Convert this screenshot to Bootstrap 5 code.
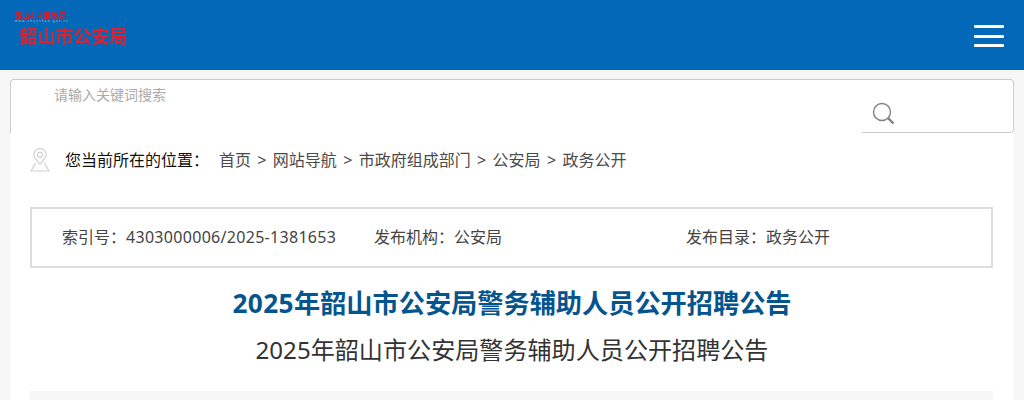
<!DOCTYPE html>
<html lang="zh-CN">
<head>
  <meta charset="UTF-8">
  <meta name="viewport" content="width=device-width, initial-scale=1.0">
  <title>2025年韶山市公安局警务辅助人员公开招聘公告</title>
  <link href="https://cdn.jsdelivr.net/npm/bootstrap@5.3.0/dist/css/bootstrap.min.css" rel="stylesheet">
  <style>
    html, body { height: 400px; overflow: hidden; }
    body { background: #f6f6f6; color: #333; font-family: "Noto Sans", "Noto Sans CJK SC", sans-serif; }
    .top-bar { height: 70px; background: #0468b9; padding: 12px 20px 0 15px; }
    .logo-wrap { width: 120px; filter: blur(.2px); }
    .logo-gov { font-size: 7px; line-height: 8px; letter-spacing: .2px; color: #e0182a; font-weight: 900; white-space: nowrap; }
    .logo-en { font-size: 3px; line-height: 3px; color: #9cc4e4; letter-spacing: 1.2px; white-space: nowrap; }
    .logo-unit { font-size: 18px; line-height: 20px; margin: 3px 0 0 4.500px; color: #e0202a; font-weight: 700; white-space: nowrap; }
    .menu-btn { width: 30px; height: 22px; margin-top: 13px; padding: 0; border: 0; background: none; }
    .menu-btn span { height: 3px; background: #fff; border-radius: 1px; }
    .page-box { margin: 9px 10px 0; background: #fff; height: 330px; overflow: hidden; }
    .search-row { height: 54px; }
    .search-left { border: solid #ccc; border-width: 1px 0 0 1px; border-top-left-radius: 4px; padding: 5px 0 0 43px; font-size: 14px; line-height: 20px; color: #aaa; }
    .search-right { width: 152px; border: solid #ccc; border-width: 1px 1px 1px 0; border-radius: 0 4px 4px 0; padding: 20px 0 0 10px; }
    .crumb-row { height: 55px; padding: 0 20px 2px; font-size: 16px; color: #4a4a4a; }
    .crumb-label { color: #111; width: 154px; margin-left: 15px; }
    .crumb-sep { margin: 0 6.350px; }
    .info-box { margin: 19px 21px 0 20px; height: 61px; border: 2px solid #ddd; padding: 0 30px 2px; font-size: 16px; color: #444; }
    .info-id { width: 312px; }
    .info-org { width: 312px; }
    .info-num { letter-spacing: .3px; }
    .title-main { margin: 17px 0 0; font-size: 26.2px; line-height: 36px; color: #04558f; font-weight: 700; text-align: center; }
    .title-main span { letter-spacing: .4px; }
    .title-sub { margin: 11px 0 0; font-size: 24.1px; line-height: 36px; color: #333; font-weight: 400; text-align: center; }
    .body-strip { margin: 23px 21px 0 20px; height: 40px; background: #f6f6f6; }
  </style>
</head>
<body>
  <!-- 顶部 -->
  <header class="top-bar d-flex justify-content-between">
    <div class="logo-wrap">
      <div class="logo-gov">韶山市人民政府</div>
      <div class="logo-en">www.shaoshan.gov.cn</div>
      <div class="logo-unit">韶山市公安局</div>
    </div>
    <button class="menu-btn d-flex flex-column justify-content-between" type="button" aria-label="菜单">
      <span class="w-100"></span>
      <span class="w-100"></span>
      <span class="w-100"></span>
    </button>
  </header>

  <div class="page-box">
    <!-- 搜索 -->
    <div class="search-row d-flex">
      <div class="search-left flex-grow-1">请输入关键词搜索</div>
      <div class="search-right">
        <svg width="23" height="23" viewBox="0 0 23 23" fill="none" stroke="#808080">
          <circle cx="10" cy="10" r="8.5" stroke-width="1.4"/>
          <path d="M16 16l5.5 5.5" stroke-width="2.4"/>
        </svg>
      </div>
    </div>

    <!-- 当前位置 -->
    <div class="crumb-row d-flex align-items-center">
      <svg width="20" height="24" viewBox="0 0 20 24" fill="none" stroke="#cfcfcf" stroke-width="1.1">
        <path d="M10 16C6 11.500 3.800 9.500 3.800 6.800a6.200 6.200 0 0 1 12.400 0C16.200 9.500 14 11.500 10 16z"/>
        <circle cx="10" cy="6.800" r="2.600"/>
        <path d="M5.500 15L1 23h18l-4.500-8"/>
      </svg>
      <span class="crumb-label">您当前所在的位置：</span>
      <span>首页</span><span class="crumb-sep">&gt;</span>
      <span>网站导航</span><span class="crumb-sep">&gt;</span>
      <span>市政府组成部门</span><span class="crumb-sep">&gt;</span>
      <span>公安局</span><span class="crumb-sep">&gt;</span>
      <span>政务公开</span>
    </div>

    <!-- 信息栏 -->
    <div class="info-box d-flex align-items-center">
      <div class="info-id">索引号：<span class="info-num">4303000006/2025-1381653</span></div>
      <div class="info-org">发布机构：公安局</div>
      <div>发布目录：政务公开</div>
    </div>

    <h1 class="title-main"><span>2025</span>年韶山市公安局警务辅助人员公开招聘公告</h1>
    <h2 class="title-sub">2025年韶山市公安局警务辅助人员公开招聘公告</h2>
    <div class="body-strip"></div>
  </div>

  <script src="https://cdn.jsdelivr.net/npm/bootstrap@5.3.0/dist/js/bootstrap.bundle.min.js"></script>
</body>
</html>
